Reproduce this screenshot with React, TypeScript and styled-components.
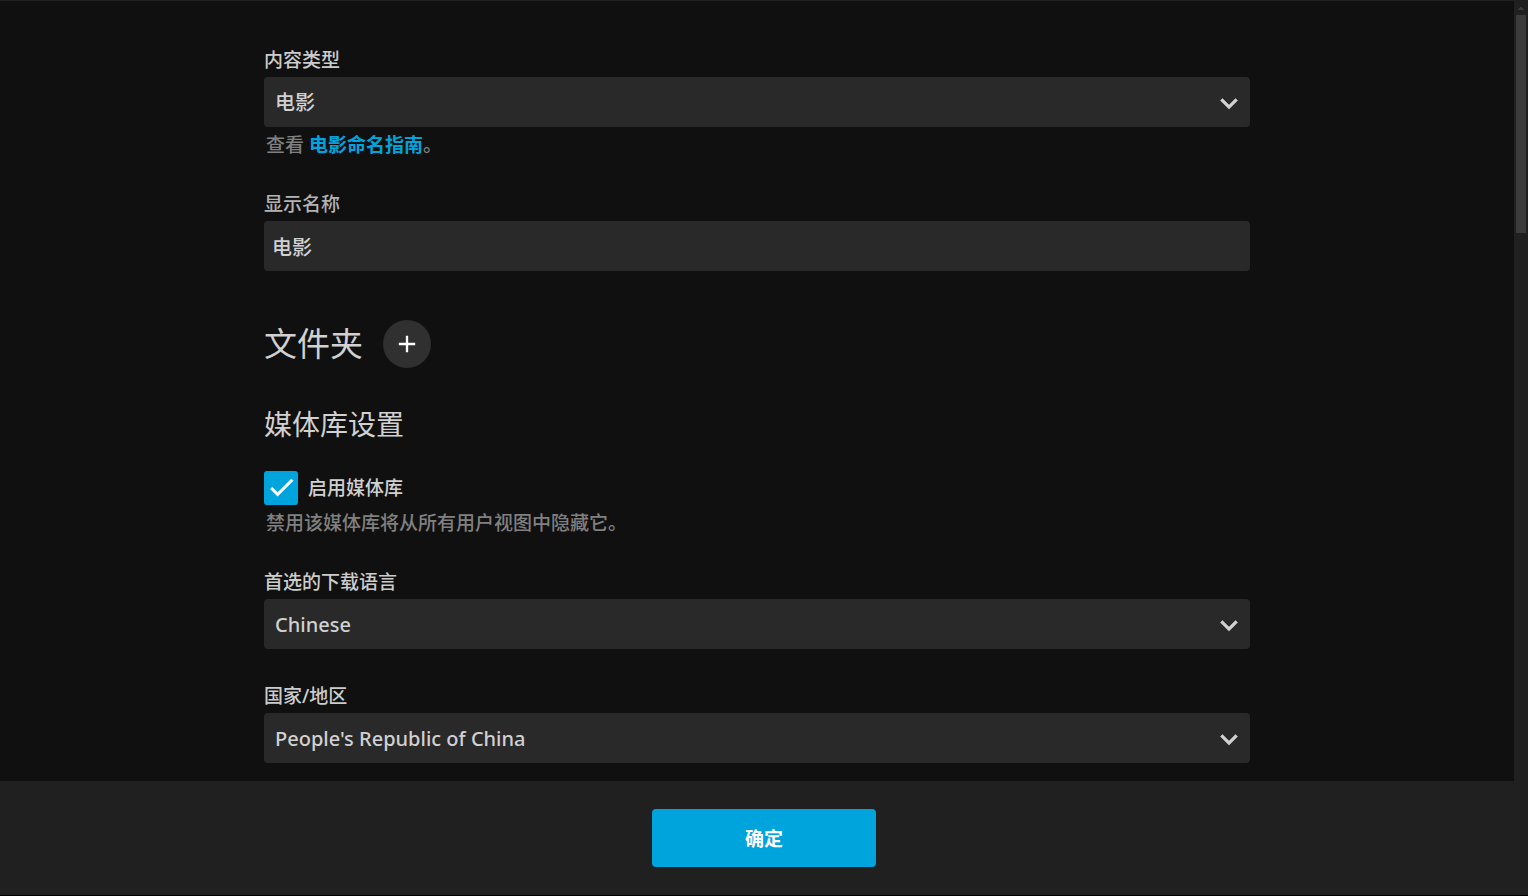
import React, { useId, useState } from "react";
import styled, { createGlobalStyle } from "styled-components";

const GlobalStyle = createGlobalStyle`
  *, *::before, *::after { box-sizing: border-box; }
  body {
    margin: 0;
    background: #000;
    color: #d1d1d1;
    font-family: "Noto Sans", "Noto Sans CJK SC", sans-serif;
    font-size: 19px;
    font-weight: 500;
    line-height: 24px;
  }
  button, input, select { font-family: inherit; font-weight: inherit; }
`;

const Dialog = styled.div`
  display: flex;
  flex-direction: column;
  height: 100vh;
  background: #101010;
  border-top: 1px solid #202020;
  border-bottom: 1px solid #000;
`;

const Body = styled.div`
  display: flex;
  flex: 1;
  min-height: 0;
`;

const ScrollArea = styled.main`
  flex: 1;
  min-width: 0;
  overflow-y: auto;
  scrollbar-width: none;
  padding: 47px 24px 18px;
`;

const ScrollRail = styled.div`
  display: flex;
  flex-direction: column;
  align-items: center;
  width: 14px;
  background: #202020;
`;

const RailArrow = styled.svg`
  width: 6px;
  height: 3px;
  margin: 6px 0 5px;
  fill: #3b3b3b;
`;

const RailThumb = styled.div`
  width: 10px;
  height: 28%;
  background: #3b3b3b;
`;

const Form = styled.form`
  width: 100%;
  max-width: 986px;
  margin: 0 auto;
`;

const Field = styled.div`
  margin-bottom: 35px;
`;

const Label = styled.label<{ $dim?: boolean }>`
  display: block;
  margin-bottom: 5px;
  color: ${(p) => (p.$dim ? "#b3b3b3" : "#cccccc")};
`;

const Control = styled.div`
  display: grid;
  align-items: center;
  & > * { grid-area: 1 / 1; }
`;

const Select = styled.select`
  appearance: none;
  width: 100%;
  height: 50px;
  margin: 0;
  padding: 0 48px 0 11px;
  border: 0;
  border-radius: 4px;
  background: #292929;
  color: #d1d1d1;
  font-size: 20px;
  outline: none;
`;

const TextInput = styled.input`
  width: 100%;
  height: 50px;
  padding: 0 8px;
  border: 0;
  border-radius: 4px;
  background: #292929;
  color: #d1d1d1;
  font-size: 20px;
  outline: none;
`;

const Chevron = styled.svg`
  justify-self: end;
  width: 34px;
  height: 34px;
  margin-right: 4px;
  fill: #d1d1d1;
  stroke: #d1d1d1;
  stroke-width: 0.4;
  pointer-events: none;
`;

const Hint = styled.div`
  margin-top: 6px;
  padding-left: 2px;
  color: #808080;
`;

const HintLink = styled.a`
  color: #00a4dc;
  font-weight: 700;
  text-decoration: none;
`;

const FolderHeader = styled.div`
  display: flex;
  align-items: center;
  gap: 20px;
  margin: 49px 0 38px;
`;

const Title = styled.h1`
  margin: 0;
  font-size: 33px;
  line-height: 48px;
  font-weight: 400;
`;

const AddButton = styled.button`
  display: grid;
  place-items: center;
  width: 48px;
  height: 48px;
  padding: 0;
  border: 0;
  border-radius: 50%;
  background: #303030;
  svg {
    width: 28px;
    height: 28px;
    fill: #fff;
  }
`;

const Subtitle = styled.h2`
  margin: 0 0 29px;
  font-size: 28px;
  line-height: 36px;
  font-weight: 400;
`;

const CheckLabel = styled.label`
  display: flex;
  align-items: center;
  gap: 10px;
`;

const CheckBox = styled.span`
  display: grid;
  place-items: center;
  & > * { grid-area: 1 / 1; }
  svg {
    width: 31px;
    height: 31px;
    fill: #fff;
    stroke: #fff;
    stroke-width: 0.4;
    pointer-events: none;
  }
  input:not(:checked) + svg { visibility: hidden; }
`;

const CheckInput = styled.input`
  appearance: none;
  width: 34px;
  height: 34px;
  margin: 0;
  border: 2px solid #808080;
  border-radius: 3px;
  &:checked {
    border-color: #00a4dc;
    background: #00a4dc;
  }
`;

const Footer = styled.footer`
  display: flex;
  justify-content: center;
  padding: 28px 24px;
  background: #202020;
`;

const SubmitButton = styled.button`
  width: 224px;
  height: 58px;
  border: 0;
  border-radius: 4px;
  background: #00a4dc;
  color: #fff;
  font-size: 19px;
  font-weight: 700;
`;

type SelectFieldProps = {
  label: string;
  options: string[];
  children?: React.ReactNode;
};

function SelectField({ label, options, children }: SelectFieldProps) {
  const id = useId();
  return (
    <Field>
      <Label htmlFor={id}>{label}</Label>
      <Control>
        <Select id={id} defaultValue={options[0]}>
          {options.map((option) => (
            <option key={option}>{option}</option>
          ))}
        </Select>
        <Chevron viewBox="0 -1 24 24" aria-hidden="true">
          <path d="M7.41 8.59 12 13.17l4.59-4.58L18 10l-6 6-6-6z" />
        </Chevron>
      </Control>
      {children}
    </Field>
  );
}

export default function App() {
  const [name, setName] = useState("电影");
  const [enabled, setEnabled] = useState(true);

  return (
    <>
      <GlobalStyle />
      <Dialog lang="zh-CN">
        <Body>
          <ScrollArea>
            <Form id="library" onSubmit={(e) => e.preventDefault()}>
              <SelectField label="内容类型" options={["电影"]}>
                <Hint>
                  查看 <HintLink href="#naming">电影命名指南</HintLink>。
                </Hint>
              </SelectField>
              <Field>
                <Label htmlFor="display-name" $dim>显示名称</Label>
                <Control>
                  <TextInput
                    id="display-name"
                    type="text"
                    value={name}
                    onChange={(e) => setName(e.target.value)}
                  />
                </Control>
              </Field>
              <FolderHeader>
                <Title>文件夹</Title>
                <AddButton type="button" aria-label="添加">
                  <svg viewBox="0 0 24 24" aria-hidden="true">
                    <path d="M19 13h-6v6h-2v-6H5v-2h6V5h2v6h6z" />
                  </svg>
                </AddButton>
              </FolderHeader>
              <Subtitle>媒体库设置</Subtitle>
              <Field>
                <CheckLabel>
                  <CheckBox>
                    <CheckInput
                      type="checkbox"
                      checked={enabled}
                      onChange={(e) => setEnabled(e.target.checked)}
                    />
                    <svg viewBox="0 1 24 24" aria-hidden="true">
                      <path d="M9 16.17 4.83 12l-1.42 1.41L9 19 21 7l-1.41-1.41z" />
                    </svg>
                  </CheckBox>
                  启用媒体库
                </CheckLabel>
                <Hint>禁用该媒体库将从所有用户视图中隐藏它。</Hint>
              </Field>
              <SelectField label="首选的下载语言" options={["Chinese"]} />
              <SelectField label="国家/地区" options={["People's Republic of China"]} />
            </Form>
          </ScrollArea>
          <ScrollRail aria-hidden="true">
            <RailArrow viewBox="0 0 6 3">
              <path d="M2 0h2v1h1v1h1v1H0V2h1V1h1z" />
            </RailArrow>
            <RailThumb />
          </ScrollRail>
        </Body>
        <Footer>
          <SubmitButton type="submit" form="library">确定</SubmitButton>
        </Footer>
      </Dialog>
    </>
  );
}
